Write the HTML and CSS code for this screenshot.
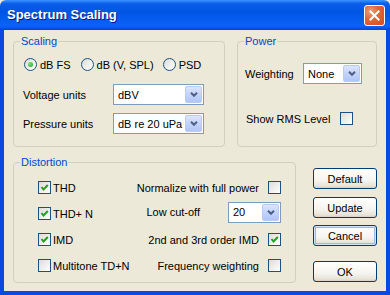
FILE: index.html
```html
<!DOCTYPE html>
<html lang="en">
<head>
<meta charset="UTF-8" />
<meta name="viewport" content="width=device-width, initial-scale=1" />
<title>Spectrum Scaling</title>
<link rel="stylesheet" href="styles.css">
</head>
<body>
  <div class="window" role="dialog" aria-label="Spectrum Scaling">
    <div class="titlebar">
      <span class="title">Spectrum Scaling</span>
      <button class="close" aria-label="Close">
        <svg width="11" height="11" viewBox="0 0 11 11"><path d="M1.5 1.5 L9.5 9.5 M9.5 1.5 L1.5 9.5" stroke="#fff" stroke-width="2" stroke-linecap="square"/></svg>
      </button>
    </div>

    <div class="client">
      <div class="row top-row">
        <fieldset class="group scaling">
          <legend>Scaling</legend>
          <div class="radios">
            <label class="radio checked"><span class="dot"></span>dB FS</label>
            <label class="radio"><span class="dot"></span>dB (V, SPL)</label>
            <label class="radio"><span class="dot"></span>PSD</label>
          </div>
          <div class="field first">
            <span class="field-label">Voltage units</span>
            <div class="combo units">dBV<span class="drop"><svg width="8" height="5" viewBox="0 0 8 5"><path d="M1 0.8 L4 3.8 L7 0.8" fill="none" stroke="#4d6185" stroke-width="2"/></svg></span></div>
          </div>
          <div class="field second">
            <span class="field-label">Pressure units</span>
            <div class="combo units">dB re 20 uPa<span class="drop"><svg width="8" height="5" viewBox="0 0 8 5"><path d="M1 0.8 L4 3.8 L7 0.8" fill="none" stroke="#4d6185" stroke-width="2"/></svg></span></div>
          </div>
        </fieldset>

        <fieldset class="group power">
          <legend>Power</legend>
          <div class="field weighting">
            <span class="field-label">Weighting</span>
            <div class="combo small">None<span class="drop"><svg width="8" height="5" viewBox="0 0 8 5"><path d="M1 0.8 L4 3.8 L7 0.8" fill="none" stroke="#4d6185" stroke-width="2"/></svg></span></div>
          </div>
          <div class="field rms">
            <span class="field-label">Show RMS Level</span>
            <span class="box"></span>
          </div>
        </fieldset>
      </div>

      <div class="row bottom-row">
        <fieldset class="group distortion">
          <legend>Distortion</legend>
          <div class="drow">
            <label class="check"><span class="box on"><svg width="11" height="11" viewBox="0 0 11 11"><path d="M2.5 5 L4.5 7.5 L8.8 3" fill="none" stroke="#21a121" stroke-width="2"/></svg></span>THD</label>
            <div class="right">Normalize with full power<span class="box"></span></div>
          </div>
          <div class="drow">
            <label class="check"><span class="box on"><svg width="11" height="11" viewBox="0 0 11 11"><path d="M2.5 5 L4.5 7.5 L8.8 3" fill="none" stroke="#21a121" stroke-width="2"/></svg></span>THD+ N</label>
            <div class="right cutoff">Low cut-off<div class="combo tiny">20<span class="drop"><svg width="8" height="5" viewBox="0 0 8 5"><path d="M1 0.8 L4 3.8 L7 0.8" fill="none" stroke="#4d6185" stroke-width="2"/></svg></span></div></div>
          </div>
          <div class="drow">
            <label class="check"><span class="box on"><svg width="11" height="11" viewBox="0 0 11 11"><path d="M2.5 5 L4.5 7.5 L8.8 3" fill="none" stroke="#21a121" stroke-width="2"/></svg></span>IMD</label>
            <div class="right">2nd and 3rd order IMD<span class="box on"><svg width="11" height="11" viewBox="0 0 11 11"><path d="M2.5 5 L4.5 7.5 L8.8 3" fill="none" stroke="#21a121" stroke-width="2"/></svg></span></div>
          </div>
          <div class="drow">
            <label class="check"><span class="box"></span>Multitone TD+N</label>
            <div class="right">Frequency weighting<span class="box"></span></div>
          </div>
        </fieldset>

        <div class="buttons">
          <button class="btn">Default</button>
          <button class="btn">Update</button>
          <button class="btn focused">Cancel</button>
          <button class="btn ok">OK</button>
        </div>
      </div>
    </div>
  </div>
</body>
</html>
```

FILE: styles.css
```css
:root {
  --face: #ece9d8;
  --group-border: #d0d0bf;
  --legend: #0046d5;
  --frame: #0a4ae0;
  --control-border: #7f9db9;
  --check-border: #1c5180;
}
* {
  box-sizing: border-box;
}
body {
  margin: 0;
  font-family: "Liberation Sans", Arial, sans-serif;
  font-size: 11px;
  color: #000;
  background: var(--face);
}
.window {
  width: 390px;
  height: 295px;
  display: flex;
  flex-direction: column;
}
.titlebar {
  height: 30px;
  flex: none;
  display: flex;
  align-items: center;
  justify-content: space-between;
  padding: 0 5px 0 7px;
  border-radius: 6px 6px 0 0;
  background: linear-gradient(180deg, #3d95ff 0%, #0a5ee8 12%, #0055e5 40%, #0a63f5 85%, #0658ef 93%, #003fd6 100%);
}
.title {
  color: #fff;
  font-weight: bold;
  font-size: 13px;
  text-shadow: 1px 1px 0 #0a1883;
  padding-bottom: 1px;
}
.close {
  width: 21px;
  height: 21px;
  padding: 0;
  border: 1px solid #fff;
  border-radius: 3px;
  background: radial-gradient(circle at 30% 30%, #f0a080 0%, #e5663c 40%, #d8471c 100%);
  display: flex;
  align-items: center;
  justify-content: center;
}
.client {
  flex: 1;
  border: 4px solid var(--frame);
  border-top: none;
  padding: 5px 9px 0;
  background: var(--face);
}
.row {
  display: flex;
}
.top-row {
  gap: 12px;
}
.bottom-row {
  gap: 17px;
  margin-top: 9px;
}

/* group boxes */
.group {
  margin: 0;
  padding: 0;
  border: 1px solid var(--group-border);
  border-radius: 4px;
  min-width: 0;
}
.group legend {
  padding: 0 1px;
  line-height: 13px;
  color: var(--legend);
}
.scaling {
  width: 212px;
  height: 112px;
  padding: 6px 0 0 9px;
}
.scaling legend {
  margin-left: -3px;
}
.power {
  width: 140px;
  height: 112px;
  padding: 15px 0 0 7px;
}
.power legend {
  margin-left: -1px;
}
.distortion {
  width: 283px;
  height: 127px;
  padding: 8px 14px 0 24px;
}
.distortion legend {
  margin-left: -18px;
}

/* radios */
.radios {
  height: 21px;
  display: flex;
  align-items: center;
  padding-left: 1px;
}
.radio {
  display: flex;
  align-items: center;
  gap: 3px;
  margin-right: 10px;
}
.radio:nth-child(2) {
  margin-right: 9px;
}
.radio .dot {
  width: 13px;
  height: 13px;
  border-radius: 50%;
  border: 1px solid var(--check-border);
  background: linear-gradient(135deg, #dcdcd7, #fff);
  display: flex;
  align-items: center;
  justify-content: center;
}
.radio.checked .dot::after {
  content: "";
  width: 5px;
  height: 5px;
  border-radius: 50%;
  background: radial-gradient(circle at 35% 35%, #7ce27a, #21a121);
}

/* fields */
.field {
  height: 21px;
  display: flex;
  align-items: center;
}
.field.first {
  margin-top: 9px;
}
.field.second {
  margin-top: 8px;
}
.scaling .field-label {
  width: 90px;
}
.weighting .field-label {
  width: 58px;
}
.rms {
  margin-top: 24px;
  padding-left: 1px;
}
.rms .field-label {
  width: 94px;
}

/* combo boxes */
.combo {
  height: 21px;
  border: 1px solid var(--control-border);
  background: #fff;
  display: flex;
  align-items: center;
  justify-content: space-between;
  padding: 1px 1px 1px 4px;
}
.combo.units {
  width: 91px;
}
.combo.small {
  width: 59px;
}
.combo.tiny {
  width: 53px;
}
.drop {
  width: 17px;
  height: 17px;
  border: 1px solid #b9caf3;
  border-radius: 2px;
  background: linear-gradient(180deg, #dbe5fd 0%, #c3d3fb 50%, #b2c6f6 100%);
  display: flex;
  align-items: center;
  justify-content: center;
}

/* checkboxes */
.box {
  width: 13px;
  height: 13px;
  flex: none;
  border: 1px solid var(--check-border);
  background: linear-gradient(135deg, #dcdcd7, #fff);
  display: flex;
  align-items: center;
  justify-content: center;
}

/* distortion rows */
.drow {
  height: 21px;
  display: flex;
  align-items: center;
  justify-content: space-between;
  margin-bottom: 5px;
}
.check {
  display: flex;
  align-items: center;
  gap: 2px;
}
.right {
  display: flex;
  align-items: center;
  gap: 9px;
}
.right.cutoff {
  gap: 28px;
  margin-top: -3px;
}

/* buttons */
.buttons {
  width: 64px;
  display: flex;
  flex-direction: column;
  padding-top: 12px;
}
.btn {
  height: 21px;
  padding: 0;
  font-family: inherit;
  font-size: 11px;
  color: #000;
  border: 1px solid #003c74;
  border-radius: 3px;
  background: linear-gradient(180deg, #fff 0%, #f5f4ef 60%, #e6e3d6 90%, #d6d0c5 100%);
  margin-bottom: 7px;
}
.btn:first-child {
  margin-bottom: 8px;
}
.btn.focused {
  box-shadow: inset 0 0 0 1px #cee7ff, inset 0 0 0 2px #98b8ea;
  margin-bottom: 15px;
}
```
